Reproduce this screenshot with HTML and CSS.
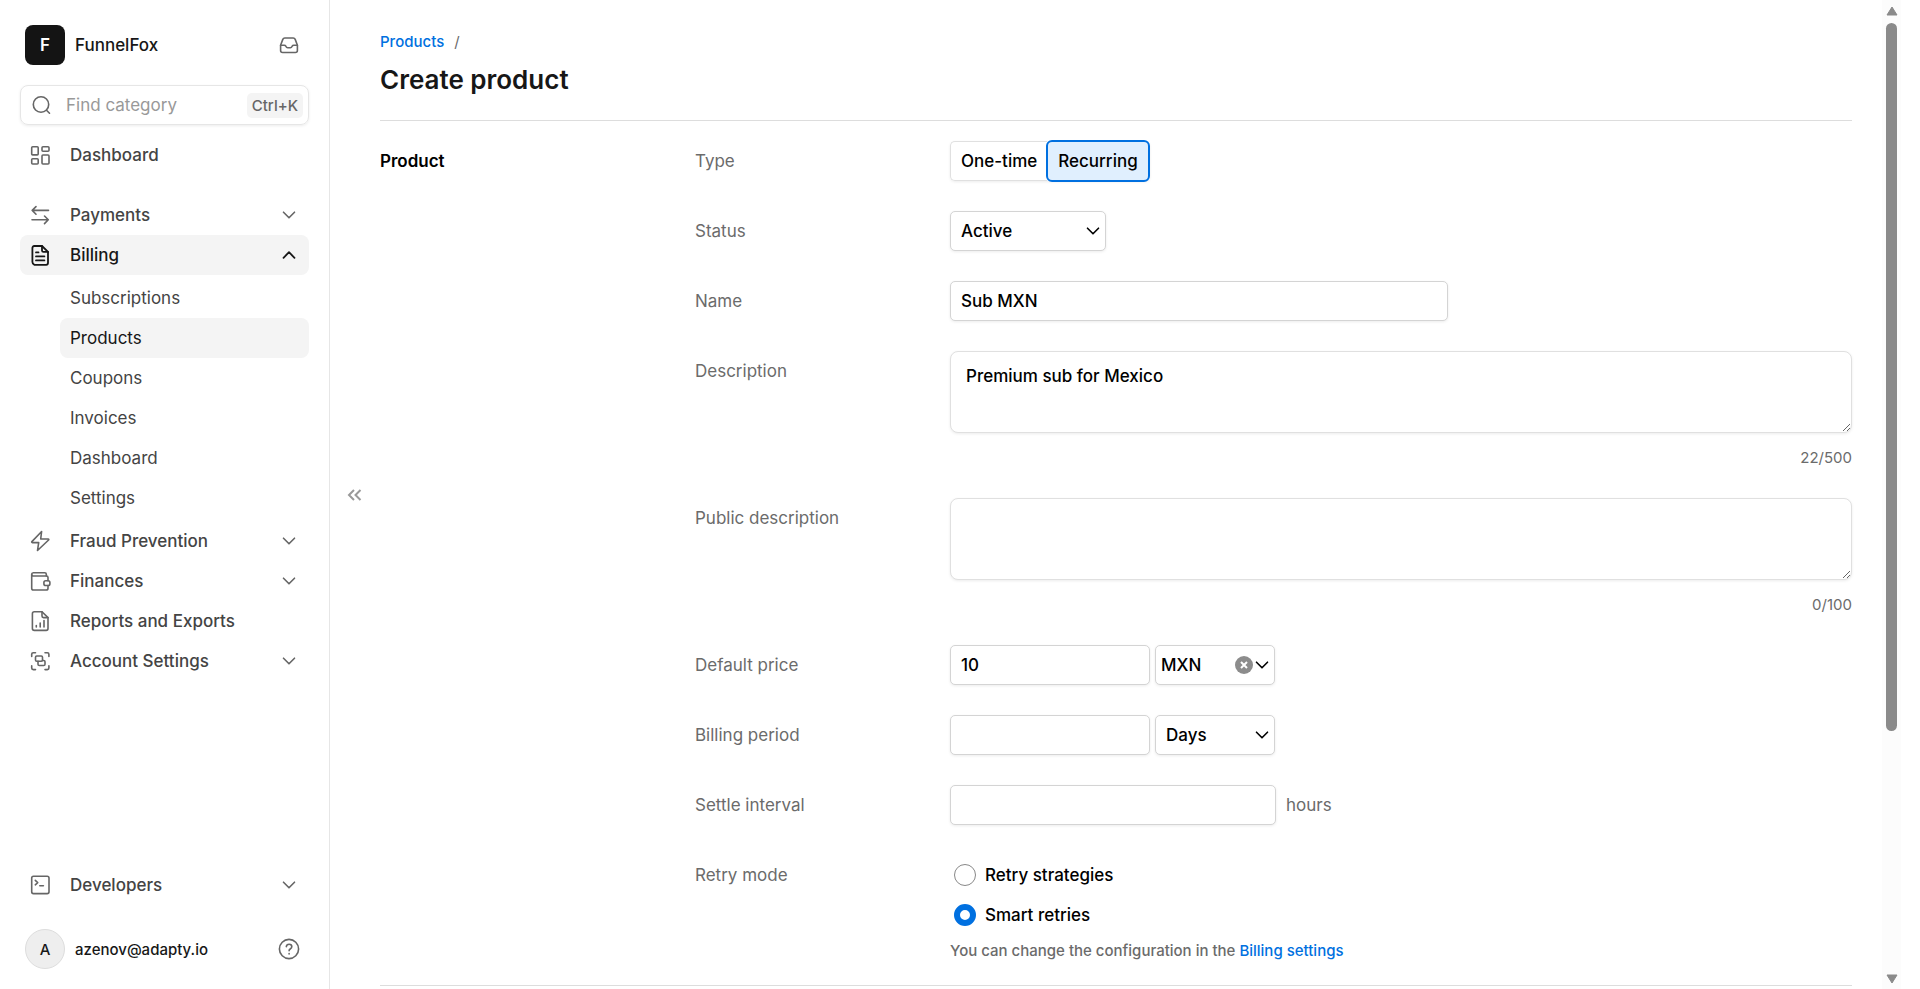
FILE: index.html
```
<!DOCTYPE html>
<html lang="en">
<head>
    <meta charset="UTF-8">
    <meta name="viewport" content="width=device-width, initial-scale=1.0">
    <title>Create product - FunnelFox</title>
    <link rel="stylesheet" href="styles.css">
</head>
<body>
    <!-- shared icons -->
    <svg class="sprite" aria-hidden="true">
        <symbol id="chevron" viewBox="0 0 24 24"><path d="M6.5 9.200l5.500 5.600 5.500-5.600"/></symbol>
        <symbol id="chevron-up" viewBox="0 0 24 24"><path d="M6.5 14.800L12 9.200l5.500 5.600"/></symbol>
    </svg>

    <aside class="sidebar">
        <div class="brand">
            <span class="brand-logo">F</span>
            <span class="brand-name">FunnelFox</span>
            <button class="icon-button" aria-label="Inbox">
                <svg class="icon" viewBox="0 0 24 24"><path d="M3.600 12.200L5.800 6.400C6.200 5.400 6.900 5 7.800 5h8.400c.9 0 1.600.4 2 1.400l2.200 5.800v5.300c0 1.300-.7 2-2 2H5.600c-1.300 0-2-.7-2-2z"/><path d="M3.600 12.200h3.700c.7 0 1.200.4 1.500 1 .4.900 1 1.600 1.900 1.600h2.600c.9 0 1.500-.7 1.900-1.600.3-.6.8-1 1.500-1h3.700"/></svg>
            </button>
        </div>

        <label class="search">
            <svg class="icon" viewBox="0 0 24 24"><circle cx="12" cy="11.500" r="7.700"/><path d="M17.500 17.200l3 3"/></svg>
            <input type="text" placeholder="Find category" aria-label="Find category">
            <kbd>Ctrl+K</kbd>
        </label>

        <nav class="nav">
            <a class="nav-item nav-home" href="#">
                <svg class="icon" viewBox="0 0 24 24"><rect x="3.700" y="3.700" width="6.500" height="8.200" rx="1"/><rect x="14" y="3.700" width="7" height="4.600" rx="1"/><rect x="3.700" y="15.700" width="6.500" height="5.300" rx="1"/><rect x="14" y="12" width="7" height="9" rx="1"/></svg>
                <span>Dashboard</span>
            </a>
            <a class="nav-item" href="#">
                <svg class="icon" viewBox="0 0 24 24"><path d="M20.500 7.400H4.200M8 3.600L4.200 7.400 8 11.200M4 16.800h16.300M16.500 13l3.800 3.800-3.800 3.800"/></svg>
                <span>Payments</span>
                <svg class="icon chevron"><use href="#chevron"/></svg>
            </a>
            <a class="nav-item active" href="#">
                <svg class="icon" viewBox="0 0 24 24"><path d="M14 3H6.300C5 3 4.400 3.700 4.400 5v14c0 1.300.6 2 1.900 2.800h11.900c1.200 0 1.800-.8 1.800-2V8.900z"/><path d="M14 3v4.400c0 1 .5 1.500 1.500 1.500H20M8 9.400h2.500M8 13.400h8.400M8 17.400h8.400"/></svg>
                <span>Billing</span>
                <svg class="icon chevron"><use href="#chevron-up"/></svg>
            </a>
            <div class="subnav">
                <a href="#">Subscriptions</a>
                <a class="active" href="#">Products</a>
                <a href="#">Coupons</a>
                <a href="#">Invoices</a>
                <a href="#">Dashboard</a>
                <a href="#">Settings</a>
            </div>
            <a class="nav-item" href="#">
                <svg class="icon" viewBox="0 0 24 24"><path d="M13.600 2.500L3.900 12.600c-.4.500-.2 1 .4 1h6.400l-1.200 7.900L20.600 11c.4-.5.200-1-.4-1h-7.500z"/></svg>
                <span>Fraud Prevention</span>
                <svg class="icon chevron"><use href="#chevron"/></svg>
            </a>
            <a class="nav-item" href="#">
                <svg class="icon" viewBox="0 0 24 24"><path d="M20 11.600V8.500c0-1-.5-1.500-1.500-1.500H5.200C4.300 7 3.700 6.300 3.700 5.400v13.800c0 1.200.6 1.800 1.800 1.800h12.700c1.200 0 1.800-.6 1.800-1.800v-2.600"/><path d="M3.700 5.400c0-1 .6-1.700 1.600-1.700h11.500c1 0 1.500.5 1.500 1.500V7"/><rect x="15.900" y="11.700" width="6" height="4.800" rx="1.800"/></svg>
                <span>Finances</span>
                <svg class="icon chevron"><use href="#chevron"/></svg>
            </a>
            <a class="nav-item" href="#">
                <svg class="icon" viewBox="0 0 24 24"><path d="M14 2.700H6.300C5 2.700 4.400 3.400 4.400 4.700v14.800c0 1.300.6 1.900 1.900 1.900h11.900c1.200 0 1.800-.6 1.800-1.900V8.600z"/><path d="M14 2.700v4.400c0 1 .5 1.500 1.500 1.500H20M8.300 16.500v1.500M12.200 14v4M16 11.500V18"/></svg>
                <span>Reports and Exports</span>
            </a>
            <a class="nav-item" href="#">
                <svg class="icon" viewBox="0 0 24 24"><path d="M3.700 7.500V5.300c0-1 .6-1.600 1.600-1.600h2.200M17 3.700h2.300c1 0 1.600.6 1.600 1.600v2.200M3.700 16.800V19c0 1 .6 1.600 1.600 1.600h2.200M17 20.600h2.300c1 0 1.600-.6 1.600-1.600v-2.200"/><rect x="7.500" y="7" width="7" height="5.300" rx="1.200"/><path d="M10 12.300v2.900c0 .9.400 1.300 1.300 1.300h4.400c.9 0 1.300-.4 1.300-1.300v-2.400c0-.9-.4-1.300-1.300-1.300h-1.200"/></svg>
                <span>Account Settings</span>
                <svg class="icon chevron"><use href="#chevron"/></svg>
            </a>
        </nav>

        <a class="nav-item developers" href="#">
            <svg class="icon" viewBox="0 0 24 24"><rect x="3.700" y="3.300" width="17.300" height="17.300" rx="1.800"/><path d="M7.300 7.400l2.400 2.200-2.400 2.200M11.800 12.800h3.600"/></svg>
            <span>Developers</span>
            <svg class="icon chevron"><use href="#chevron"/></svg>
        </a>

        <div class="account">
            <span class="avatar">A</span>
            <span class="account-email">azenov@adapty.io</span>
            <button class="icon-button" aria-label="Help">
                <svg class="icon" viewBox="0 0 24 24"><circle cx="12" cy="12" r="9.600"/><path d="M9.300 9.700c.2-1.500 1.300-2.400 2.800-2.400 1.600 0 2.700 1 2.700 2.400 0 1.200-.8 1.800-1.600 2.300-.8.500-1.100.9-1.100 1.700"/><path d="M12.100 16.600v.3"/></svg>
            </button>
        </div>
    </aside>

    <main class="main">
        <div class="gutter">
            <button class="collapse" aria-label="Collapse sidebar">
                <svg viewBox="0 0 24 24"><path d="M11 7l-5 5 5 5M17.500 7l-5 5 5 5"/></svg>
            </button>
        </div>

        <div class="content">
            <header class="page-header">
                <div class="breadcrumb"><a href="#">Products</a><span>/</span></div>
                <h1>Create product</h1>
            </header>

            <form class="section">
                <h2>Product</h2>
                <div class="fields">
                    <div class="field">
                        <span class="label" id="type-label">Type</span>
                        <div class="segmented" role="group" aria-labelledby="type-label">
                            <button type="button">One-time</button>
                            <button type="button" class="selected" aria-pressed="true">Recurring</button>
                        </div>
                    </div>

                    <div class="field">
                        <label class="label" for="status">Status</label>
                        <div class="control">
                            <div class="select select-status">
                                <select id="status"><option>Active</option><option>Inactive</option></select>
                                <svg class="icon"><use href="#chevron"/></svg>
                            </div>
                        </div>
                    </div>

                    <div class="field">
                        <label class="label" for="name">Name</label>
                        <div class="control">
                            <input class="input input-name" id="name" type="text" value="Sub MXN">
                        </div>
                    </div>

                    <div class="field">
                        <label class="label" for="description">Description</label>
                        <div class="text-control">
                            <textarea id="description">Premium sub for Mexico</textarea>
                            <span class="counter">22/500</span>
                        </div>
                    </div>

                    <div class="field">
                        <label class="label" for="public-description">Public description</label>
                        <div class="text-control">
                            <textarea id="public-description"></textarea>
                            <span class="counter">0/100</span>
                        </div>
                    </div>

                    <div class="field">
                        <label class="label" for="price">Default price</label>
                        <div class="control">
                            <input class="input input-short" id="price" type="text" value="10">
                            <div class="select select-currency">
                                <select aria-label="Currency"><option>MXN</option><option>USD</option></select>
                                <button type="button" class="clear" aria-label="Clear currency">
                                    <svg viewBox="0 0 18 18"><path d="M6 6l6 6M12 6l-6 6"/></svg>
                                </button>
                                <svg class="icon"><use href="#chevron"/></svg>
                            </div>
                        </div>
                    </div>

                    <div class="field">
                        <label class="label" for="period">Billing period</label>
                        <div class="control">
                            <input class="input input-short" id="period" type="text">
                            <div class="select">
                                <select aria-label="Period unit"><option>Days</option><option>Weeks</option></select>
                                <svg class="icon"><use href="#chevron"/></svg>
                            </div>
                        </div>
                    </div>

                    <div class="field">
                        <label class="label" for="settle">Settle interval</label>
                        <div class="control">
                            <input class="input input-settle" id="settle" type="text">
                            <span class="unit">hours</span>
                        </div>
                    </div>

                    <div class="field">
                        <span class="label" id="retry-label">Retry mode</span>
                        <div class="retry" role="radiogroup" aria-labelledby="retry-label">
                            <label class="radio"><input type="radio" name="retry">Retry strategies</label>
                            <label class="radio"><input type="radio" name="retry" checked>Smart retries</label>
                            <p class="hint">You can change the configuration in the <a href="#">Billing settings</a></p>
                        </div>
                    </div>
                </div>
            </form>
        </div>

        <div class="scrollbar" aria-hidden="true">
            <svg viewBox="0 0 12 10"><path d="M6 1l5 8H1z"/></svg>
            <div class="scroll-track"><div class="scroll-thumb"></div></div>
            <svg viewBox="0 0 12 10"><path d="M6 9l5-8H1z"/></svg>
        </div>
    </main>
</body>
</html>
```

FILE: styles.css
```
* {
    margin: 0;
    padding: 0;
    box-sizing: border-box;
}

:root {
    --blue: #0070e0;
    --text: #171717;
    --nav: #444;
    --muted: #6b6b6b;
    --border: #d4d4d4;
    --light-border: #e0e0e0;
    --hover: #f4f4f4;
    --shadow: 0 1px 3px rgba(0, 0, 0, 0.08);
}

body {
    display: flex;
    height: 100vh;
    overflow: hidden;
    background: #fff;
    color: #000;
    font-family: 'Inter', sans-serif;
    font-size: 17px;
    line-height: 25px;
}

button, input, select, textarea {
    font: inherit;
    color: inherit;
}

button {
    border: none;
    background: none;
    cursor: pointer;
}

a {
    color: var(--blue);
    text-decoration: none;
}

.sprite {
    display: none;
}

.icon {
    width: 24px;
    height: 24px;
    flex: none;
    fill: none;
    stroke: currentColor;
    stroke-width: 1.6;
    stroke-linecap: round;
    stroke-linejoin: round;
}

/* Sidebar */
.sidebar {
    display: flex;
    flex-direction: column;
    flex: none;
    width: 330px;
    padding: 25px 20px 20px;
    border-right: 1px solid #e6e6e6;
}

.brand, .account {
    display: flex;
    align-items: center;
    gap: 10px;
    padding: 0 8px 0 5px;
    color: var(--text);
}

.brand-logo, .avatar {
    display: flex;
    align-items: center;
    justify-content: center;
    width: 40px;
    height: 40px;
}

.brand-logo {
    border-radius: 8px;
    background: #141414;
    color: #fff;
    font-weight: 600;
}

.brand-name {
    font-weight: 500;
}

.icon-button {
    display: flex;
    margin-left: auto;
    color: #666;
}

.search {
    display: flex;
    align-items: center;
    height: 40px;
    margin: 20px 0 10px;
    padding: 0 5px 0 8px;
    border: 1px solid #e6e6e6;
    border-radius: 8px;
    box-shadow: var(--shadow);
    color: #666;
}

.search input {
    flex: 1;
    min-width: 0;
    margin-left: 13px;
    border: none;
    outline: none;
    background: none;
}

.search input::placeholder {
    color: #999;
}

.search kbd {
    padding: 0 5px;
    border-radius: 5px;
    background: var(--hover);
    font-family: inherit;
    font-size: 15px;
    font-weight: 500;
}

.nav-item {
    display: flex;
    align-items: center;
    gap: 18px;
    height: 40px;
    padding: 0 8px;
    border-radius: 8px;
    color: var(--nav);
    font-weight: 500;
}

.nav-item .icon {
    color: #666;
}

.nav-item .chevron {
    margin-left: auto;
}

.nav-home {
    margin-bottom: 20px;
}

.nav-item.active, .subnav .active {
    background: var(--hover);
    color: var(--text);
}

.nav-item.active .icon {
    color: var(--text);
    stroke-width: 1.8;
}

.subnav {
    display: flex;
    flex-direction: column;
    margin: 3px 0 3px 40px;
}

.subnav a {
    height: 40px;
    padding: 0 10px;
    border-radius: 8px;
    color: var(--nav);
    line-height: 40px;
}

.developers {
    margin-top: auto;
    margin-bottom: 24px;
}

.avatar {
    border: 1px solid #ddd;
    border-radius: 50%;
    background: #eee;
    font-size: 15px;
    font-weight: 500;
}

.account-email {
    font-size: 15px;
    font-weight: 500;
}

/* Page */
.main {
    display: flex;
    flex: 1;
    min-width: 0;
    padding-right: 19px;
}

.gutter {
    display: flex;
    align-items: center;
    justify-content: center;
    width: 50px;
    flex: none;
}

.collapse {
    display: flex;
}

.collapse svg {
    width: 24px;
    height: 24px;
    fill: none;
    stroke: #999;
    stroke-width: 2;
}

.content {
    flex: 1;
    min-width: 0;
    padding: 29px 30px 0 0;
}

.page-header {
    padding-bottom: 22px;
    border-bottom: 1px solid #ddd;
}

.breadcrumb {
    display: flex;
    gap: 10px;
    color: var(--muted);
    font-size: 15px;
    font-weight: 500;
}

.breadcrumb span {
    font-weight: 400;
}

h1 {
    margin-top: 8px;
    color: var(--text);
    font-size: 26px;
    font-weight: 600;
    line-height: 36px;
}

.section {
    display: flex;
    padding: 20px 0 22px;
    border-bottom: 1px solid #ddd;
}

.section h2 {
    width: 315px;
    flex: none;
    font-size: 17px;
    font-weight: 600;
    line-height: 40px;
}

.fields {
    display: flex;
    flex-direction: column;
    flex: 1;
    gap: 30px;
}

.field {
    display: flex;
    align-items: flex-start;
}

.label {
    width: 255px;
    flex: none;
    color: var(--muted);
    line-height: 40px;
}

.control {
    display: flex;
    align-items: center;
    gap: 5px;
}

.segmented {
    display: flex;
    height: 40px;
    border-radius: 5px;
    box-shadow: var(--shadow);
}

.segmented button {
    padding: 0 10px;
    border: 1px solid var(--light-border);
    border-right: none;
    border-radius: 5px 0 0 5px;
    font-weight: 500;
}

.segmented .selected {
    margin: -1px 0 -1px -1px;
    border: 2px solid var(--blue);
    border-radius: 6px;
    background: #e0effe;
}

.input, .select select {
    height: 40px;
    padding: 0 10px;
    border: 1px solid var(--border);
    border-radius: 5px;
    background: #fff;
    box-shadow: var(--shadow);
    font-weight: 500;
}

.input-name {
    width: 498px;
}

.input-short {
    width: 200px;
}

.input-settle {
    width: 326px;
}

.select {
    position: relative;
    width: 120px;
}

.select-status {
    width: 156px;
}

.select select {
    display: block;
    width: 100%;
    appearance: none;
}

.select .icon {
    position: absolute;
    top: 8px;
    right: 1px;
    pointer-events: none;
}

.select-currency select {
    padding-left: 5px;
}

.clear {
    position: absolute;
    top: 11px;
    right: 22px;
    display: flex;
    width: 18px;
    height: 18px;
    border-radius: 50%;
    background: #8c8c8c;
}

.clear svg {
    fill: none;
    stroke: #fff;
    stroke-width: 2;
}

.text-control {
    display: flex;
    flex-direction: column;
    flex: 1;
}

textarea {
    height: 82px;
    padding: 12px 15px;
    border: 1px solid var(--light-border);
    border-radius: 8px;
    box-shadow: var(--shadow);
    font-weight: 500;
    resize: vertical;
}

.counter {
    margin-top: 15px;
    color: var(--muted);
    font-size: 15px;
    line-height: 20px;
    text-align: right;
}

.unit {
    margin-left: 5px;
    color: var(--muted);
}

.radio {
    display: flex;
    align-items: center;
    gap: 9px;
    height: 40px;
    padding-left: 4px;
    font-weight: 500;
}

.radio input {
    width: 22px;
    height: 22px;
    appearance: none;
    border: 1px solid #888;
    border-radius: 50%;
    background: #fff;
}

.radio input:checked {
    border: 6px solid var(--blue);
}

.hint {
    margin-top: 3px;
    color: var(--muted);
    font-size: 15px;
    font-weight: 500;
}

/* Scrollbar */
.scrollbar {
    display: flex;
    flex-direction: column;
    align-items: center;
    width: 19px;
    padding: 6px 0 5px;
    background: #fcfcfc;
}

.scrollbar svg {
    width: 12px;
    height: 10px;
    fill: #8a8a8a;
    stroke: #8a8a8a;
    stroke-linejoin: round;
}

.scroll-track {
    flex: 1;
    padding: 7px 0;
}

.scroll-thumb {
    width: 11px;
    height: 75%;
    border-radius: 6px;
    background: #8a8a8a;
}
```
